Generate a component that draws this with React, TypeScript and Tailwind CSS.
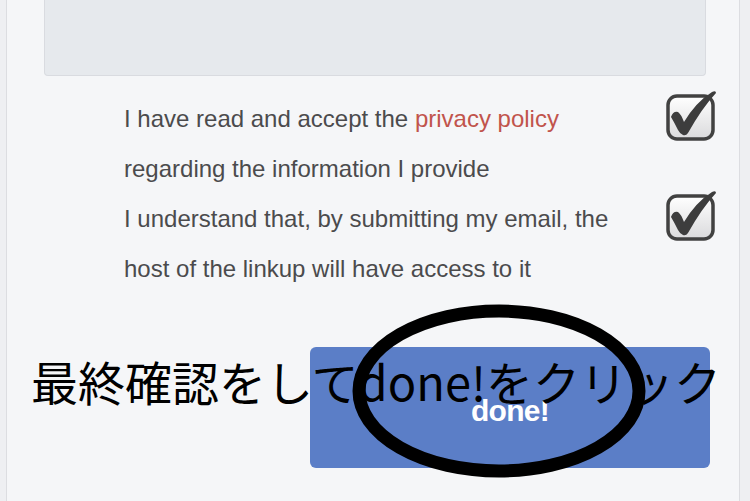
export default function App() {
  const consents = [
    {
      id: "privacy",
      lines: [
        <>
          I have read and accept the <span className="text-[#c1544c]">privacy policy</span>
        </>,
        <>regarding the information I provide</>,
      ],
    },
    {
      id: "email",
      lines: [<>I understand that, by submitting my email, the</>, <>host of the linkup will have access to it</>],
    },
  ];

  return (
    <div className="relative h-[501px] w-[750px] overflow-hidden bg-[#eeeff2] font-['Liberation_Sans',Arial,sans-serif]">
      <div className="ml-[6px] mr-[10px] h-full border-x border-[#dcdde1] bg-[#f5f6f8]">
        <div className="ml-[37px] mr-[33px] h-[76px] rounded-b-[4px] border-x border-b border-[#d9dbe0] bg-[#e6e9ed]" />

        <div className="mt-[18px] flex flex-col">
          {consents.map((c) => (
            <div key={c.id} className="flex items-start">
              <div className="ml-[117px] w-[520px] text-[24px] leading-[50px] text-[#4b4b4d]">
                {c.lines.map((l, i) => (
                  <div key={i}>{l}</div>
                ))}
              </div>
              <CheckIcon />
            </div>
          ))}
        </div>

        <div className="mt-[53px] flex">
          <button className="ml-[303px] flex h-[121px] w-[400px] items-center justify-center rounded-[6px] bg-[#5b7ec7] pt-[6px] text-[30px] font-bold tracking-tight text-white">
            done!
          </button>
        </div>
      </div>

      {/* annotation overlay */}
      <div className="absolute left-[31px] top-[351px] whitespace-nowrap font-['Noto_Sans_CJK_JP',sans-serif] text-[47px] leading-[60px] text-black">
        最終確認をしてdone!をクリック
      </div>
      <svg className="absolute left-[350px] top-[303px]" width="300" height="178" viewBox="0 0 300 178">
        <ellipse cx="149" cy="88" rx="140" ry="80" fill="none" stroke="#000" strokeWidth="13" />
      </svg>
    </div>
  );
}

function CheckIcon() {
  return (
    <svg className="ml-[22px] mt-[-4px] shrink-0" width="54" height="54" viewBox="0 0 54 54">
      <defs>
        <linearGradient id="cbfill" x1="0" y1="0" x2="0" y2="1">
          <stop offset="0" stopColor="#ffffff" />
          <stop offset="1" stopColor="#dadadc" />
        </linearGradient>
      </defs>
      <rect x="2" y="6" width="45" height="43" rx="9" fill="url(#cbfill)" stroke="#414141" strokeWidth="3.5" />
      <path
        d="M5 27 Q7 21 12 22 Q15 24 18 32 Q30 12 46 2 Q50 0 50 3 Q36 18 22 43 Q20 46 17 45 Q14 44 12 40 Q8 32 5 27 Z"
        fill="#3d3d3d"
      />
    </svg>
  );
}
